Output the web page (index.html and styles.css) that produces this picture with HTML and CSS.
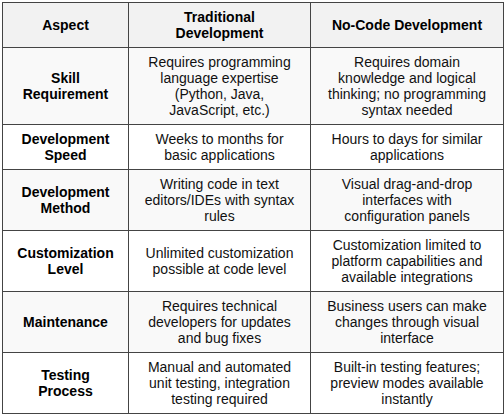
FILE: index.html
```html
<!DOCTYPE html>
<html lang="en">
<head>
    <meta charset="UTF-8">
    <meta name="viewport" content="width=device-width, initial-scale=1.0">
    <title>Traditional vs No-Code Development</title>
    <link rel="stylesheet" href="styles.css">
</head>
<body>
    <table class="compare">
        <colgroup>
            <col class="col-aspect">
            <col class="col-trad">
            <col class="col-nocode">
        </colgroup>
        <thead>
            <tr>
                <th>Aspect</th>
                <th>Traditional Development</th>
                <th>No-Code Development</th>
            </tr>
        </thead>
        <tbody>
            <tr>
                <td class="aspect">Skill Requirement</td>
                <td>Requires programming language expertise (Python, Java, JavaScript, etc.)</td>
                <td>Requires domain knowledge and logical thinking; no programming syntax needed</td>
            </tr>
            <tr>
                <td class="aspect">Development Speed</td>
                <td>Weeks to months for basic applications</td>
                <td>Hours to days for similar applications</td>
            </tr>
            <tr>
                <td class="aspect">Development Method</td>
                <td>Writing code in text editors/IDEs with syntax rules</td>
                <td>Visual drag-and-drop interfaces with configuration panels</td>
            </tr>
            <tr>
                <td class="aspect">Customization Level</td>
                <td>Unlimited customization possible at code level</td>
                <td>Customization limited to platform capabilities and available integrations</td>
            </tr>
            <tr>
                <td class="aspect">Maintenance</td>
                <td>Requires technical developers for updates and bug fixes</td>
                <td>Business users can make changes through visual interface</td>
            </tr>
            <tr>
                <td class="aspect">Testing Process</td>
                <td>Manual and automated unit testing, integration testing required</td>
                <td>Built-in testing features; preview modes available instantly</td>
            </tr>
        </tbody>
    </table>
</body>
</html>
```

FILE: styles.css
```css
body {
    margin: 0;
    padding: 2px 0 0 2px;
    background-color: white;
    font-family: "Liberation Sans", Arial, sans-serif;
    font-size: 14px;
    color: #111;
}
.compare {
    width: 502px;
    table-layout: fixed;
    border-collapse: collapse;
    border: 1px solid #444;
}
.col-aspect {
    width: 126px;
}
.col-trad {
    width: 182px;
}
.compare th,
.compare td {
    border: 1px solid #444;
    padding: 6px 12px;
    text-align: center;
    vertical-align: middle;
    line-height: 16px;
}
.compare th {
    background-color: #f2f2f2;
    font-weight: bold;
    color: #000;
}
.compare tbody tr:nth-child(odd) {
    background-color: #f9f9f9;
}
.aspect {
    font-weight: bold;
    color: #000;
}
```
